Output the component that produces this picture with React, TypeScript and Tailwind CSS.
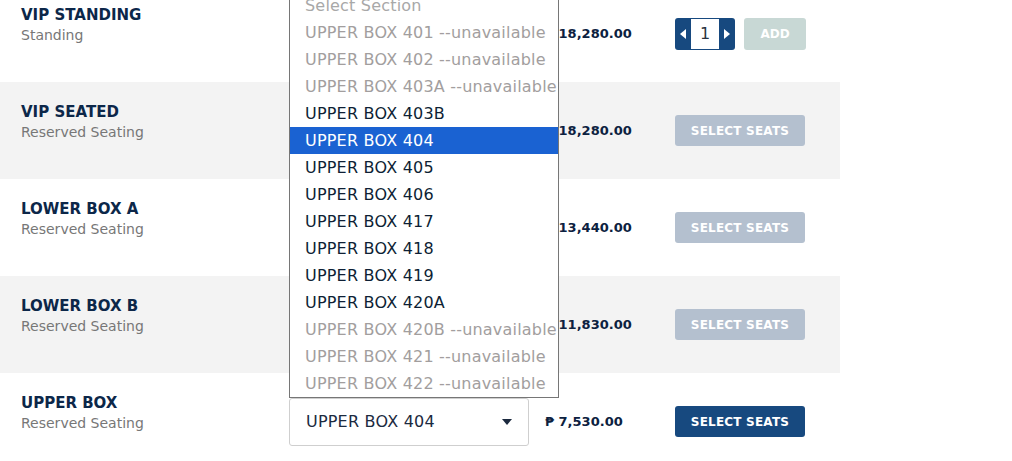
import React from "react";

type Row = {
  name: string;
  sub: string;
  price: string;
  kind: "qty" | "seats" | "select";
  grey: boolean;
};

const rows: Row[] = [
  { name: "VIP STANDING", sub: "Standing", price: "₱ 18,280.00", kind: "qty", grey: false },
  { name: "VIP SEATED", sub: "Reserved Seating", price: "₱ 18,280.00", kind: "seats", grey: true },
  { name: "LOWER BOX A", sub: "Reserved Seating", price: "₱ 13,440.00", kind: "seats", grey: false },
  { name: "LOWER BOX B", sub: "Reserved Seating", price: "₱ 11,830.00", kind: "seats", grey: true },
  { name: "UPPER BOX", sub: "Reserved Seating", price: "₱ 7,530.00", kind: "select", grey: false },
];

const sections: { label: string; off?: boolean; placeholder?: boolean }[] = [
  { label: "Select Section", placeholder: true },
  { label: "UPPER BOX 401 --unavailable", off: true },
  { label: "UPPER BOX 402 --unavailable", off: true },
  { label: "UPPER BOX 403A --unavailable", off: true },
  { label: "UPPER BOX 403B" },
  { label: "UPPER BOX 404" },
  { label: "UPPER BOX 405" },
  { label: "UPPER BOX 406" },
  { label: "UPPER BOX 417" },
  { label: "UPPER BOX 418" },
  { label: "UPPER BOX 419" },
  { label: "UPPER BOX 420A" },
  { label: "UPPER BOX 420B --unavailable", off: true },
  { label: "UPPER BOX 421 --unavailable", off: true },
  { label: "UPPER BOX 422 --unavailable", off: true },
];

const Stepper: React.FC = () => (
  <div className="flex items-center gap-[9px]">
    <div className="flex h-[32px] w-[60px] rounded-[3px] bg-[#17497f] overflow-hidden">
      <button className="w-[16px] flex items-center justify-center">
        <svg width="6" height="10" viewBox="0 0 6 10">
          <path d="M6 0 L0 5 L6 10 Z" fill="#fff" />
        </svg>
      </button>
      <div className="w-[28px] my-[1px] bg-white flex items-center justify-center text-[16px] text-[#2a3340]">
        1
      </div>
      <button className="w-[16px] flex items-center justify-center">
        <svg width="6" height="10" viewBox="0 0 6 10">
          <path d="M0 0 L6 5 L0 10 Z" fill="#fff" />
        </svg>
      </button>
    </div>
    <button className="h-[32px] w-[62px] rounded-[3px] bg-[#c8d8d5] text-white text-[12px] font-bold">
      ADD
    </button>
  </div>
);

const SeatsButton: React.FC<{ active?: boolean }> = ({ active }) => (
  <button
    className={
      active
        ? "h-[31px] w-[130px] rounded-[3px] bg-[#17497f] text-white text-[12px] font-bold tracking-[0.2px]"
        : "h-[31px] w-[130px] rounded-[3px] bg-[#b4c0cf] text-white text-[12px] font-bold tracking-[0.2px]"
    }
  >
    SELECT SEATS
  </button>
);

const SectionSelect: React.FC = () => (
  <div className="relative w-[240px]">
    {/* open native list */}
    <div className="absolute bottom-full left-0 z-10 w-[270px] border border-[#767676] bg-white">
      {sections.map(s => (
        <div
          key={s.label}
          className={
            s.label === "UPPER BOX 404"
              ? "h-[27px] pl-[15px] flex items-center whitespace-nowrap text-[16px] tracking-[0.2px] bg-[#1a62d2] text-white"
              : s.placeholder
              ? "h-[27px] pl-[15px] flex items-center whitespace-nowrap text-[16px] tracking-[0.2px] text-[#a8a8a8]"
              : s.off
              ? "h-[27px] pl-[15px] flex items-center whitespace-nowrap text-[16px] tracking-[0.2px] text-[#a29e9e]"
              : "h-[27px] pl-[15px] flex items-center whitespace-nowrap text-[16px] tracking-[0.2px] text-[#0e1f35]"
          }
        >
          {s.label}
        </div>
      ))}
    </div>
    <div className="h-[48px] flex items-center justify-between pl-[16px] pr-[16px] border border-[#cfcfcf] rounded-[3px] bg-white text-[16px] tracking-[0.2px] text-[#1c2a3f]">
      <span>UPPER BOX 404</span>
      <svg width="10" height="6" viewBox="0 0 10 6">
        <path d="M0 0 L10 0 L5 6 Z" fill="#1c2a3f" />
      </svg>
    </div>
  </div>
);

export default function App() {
  return (
    <div className="h-[461px] overflow-hidden bg-white font-['DejaVu_Sans',sans-serif]">
      <div className="w-[840px] -mt-[15px]">
        {rows.map(r => (
          <div
            key={r.name}
            className={
              r.grey
                ? "h-[97px] flex items-center bg-[#f3f3f3]"
                : "h-[97px] flex items-center bg-white"
            }
          >
            <div className="w-[268px] ml-[21px] self-start pt-[20px]">
              <div className="text-[15px] font-bold leading-[20px] text-[#0c2749]">{r.name}</div>
              <div className="text-[14px] leading-[20px] text-[#777777]">{r.sub}</div>
            </div>
            <div className="w-[240px] mt-[1px]">
              {r.kind === "select" && <SectionSelect />}
            </div>
            <div className="w-[130px] ml-[16px] text-[13px] font-bold text-[#0c2140]">
              {r.price}
            </div>
            <div className="w-[131px] flex">
              {r.kind === "qty" && <Stepper />}
              {r.kind === "seats" && <SeatsButton />}
              {r.kind === "select" && <SeatsButton active />}
            </div>
          </div>
        ))}
      </div>
    </div>
  );
}
